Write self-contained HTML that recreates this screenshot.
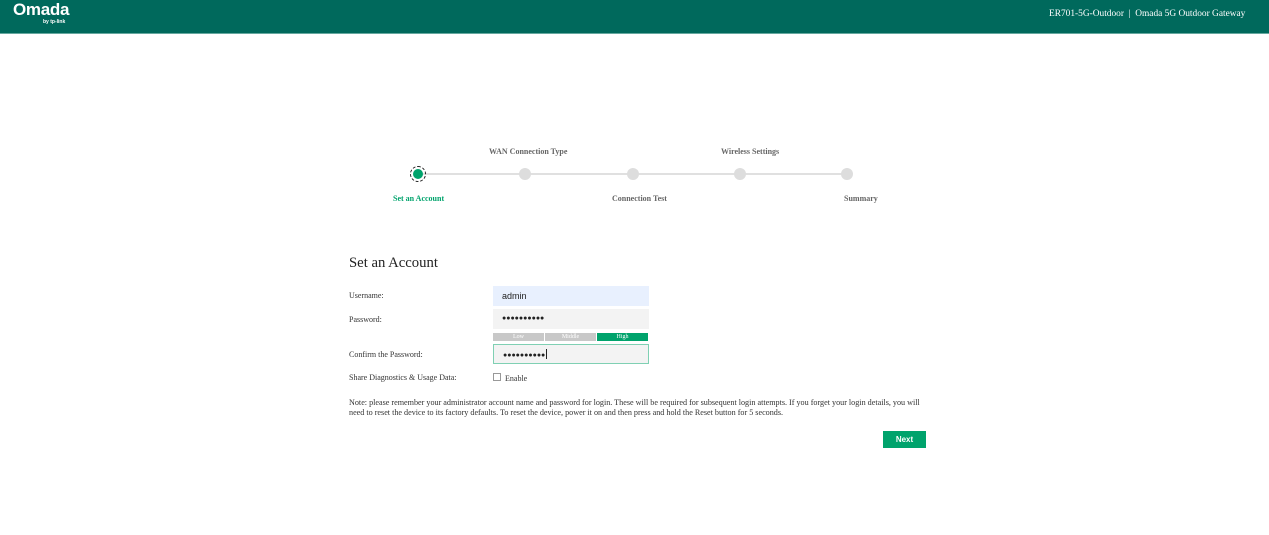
<!DOCTYPE html>
<html><head><style>
*{margin:0;padding:0;box-sizing:border-box}
body{width:1269px;height:535px;background:#fff;font-family:"Liberation Serif",serif;position:relative;overflow:hidden;color:#333}
.hdr{position:absolute;left:0;top:0;width:1269px;height:33px;background:#00695c}
.a{position:absolute;white-space:nowrap}
.lbl{font-size:8px;font-weight:bold;color:#666}
.dot{position:absolute;width:12px;height:12px;border-radius:50%;background:#ddd;top:168px}
.f{font-size:8px;color:#333}
.inp{position:absolute;left:493px;width:156px;height:20px;background:#f3f3f3;font-family:"Liberation Sans",sans-serif;font-size:9px;padding-left:9px;line-height:20px;color:#222}
.pw{font-size:7px;letter-spacing:0}
</style></head><body>
<div class="hdr"></div>
<div class="a" style="left:13px;top:0px;font-family:'Liberation Sans',sans-serif;font-size:17px;font-weight:bold;color:#fff;letter-spacing:-0.3px">Omada</div>
<div class="a" style="left:43px;top:19px;font-family:'Liberation Sans',sans-serif;font-size:5px;font-weight:bold;color:#fff">by tp-link</div>
<div class="a" style="left:1049px;top:9px;font-size:9.4px;color:#fff">ER701-5G-Outdoor &nbsp;| &nbsp;Omada 5G Outdoor Gateway</div>
<div class="hdr" style="top:33px;height:1px;background:#66a89f"></div>

<div class="a" style="left:418px;top:173px;width:429px;height:2px;background:#e0e0e0"></div>
<div class="a" style="left:410px;top:166px;width:16px;height:16px;border-radius:50%;border:1.5px dashed #222"></div>
<div class="a" style="left:413px;top:169px;width:10px;height:10px;border-radius:50%;background:#00a36c"></div>
<div class="dot" style="left:519px"></div>
<div class="dot" style="left:627px"></div>
<div class="dot" style="left:734px"></div>
<div class="dot" style="left:841px"></div>
<div class="a lbl" style="left:489px;top:147px">WAN Connection Type</div>
<div class="a lbl" style="left:721px;top:147px">Wireless Settings</div>
<div class="a lbl" style="left:393px;top:194px;color:#00a36c">Set an Account</div>
<div class="a lbl" style="left:612px;top:194px">Connection Test</div>
<div class="a lbl" style="left:844px;top:194px">Summary</div>

<div class="a" style="left:349px;top:255px;font-size:14.7px;color:#222">Set an Account</div>
<div class="a f" style="left:349px;top:291px">Username:</div>
<div class="a f" style="left:349px;top:315px">Password:</div>
<div class="a f" style="left:349px;top:350px">Confirm the Password:</div>
<div class="a f" style="left:349px;top:373px">Share Diagnostics &amp; Usage Data:</div>
<div class="inp" style="top:286px;background:#e8f0fe">admin</div>
<div class="inp pw" style="top:309px">●●●●●●●●●●</div>
<div class="a" style="left:493px;top:333px;width:51px;height:8px;background:#c8c8c8;font-size:6px;color:#fff;text-align:center;line-height:8px">Low</div>
<div class="a" style="left:545px;top:333px;width:51px;height:8px;background:#c8c8c8;font-size:6px;color:#fff;text-align:center;line-height:8px">Middle</div>
<div class="a" style="left:597px;top:333px;width:51px;height:8px;background:#00a36c;font-size:6px;color:#fff;text-align:center;line-height:8px">High</div>
<div class="inp pw" style="top:344px;border:1px solid #7fd0b3;line-height:18px">●●●●●●●●●●<span style="border-left:1px solid #222;margin-left:1px;font-size:9px"></span></div>
<div class="a" style="left:493px;top:373px;width:8px;height:8px;border:1px solid #999"></div>
<div class="a f" style="left:505px;top:374px">Enable</div>
<div class="a" style="left:349px;top:398px;font-size:8.15px;line-height:10px;color:#333">Note: please remember your administrator account name and password for login. These will be required for subsequent login attempts. If you forget your login details, you will<br>need to reset the device to its factory defaults. To reset the device, power it on and then press and hold the Reset button for 5 seconds.</div>
<div class="a" style="left:883px;top:431px;width:43px;height:17px;background:#00a36c;color:#fff;font-family:'Liberation Sans',sans-serif;font-size:8px;font-weight:bold;text-align:center;line-height:17px">Next</div>
</body></html>
